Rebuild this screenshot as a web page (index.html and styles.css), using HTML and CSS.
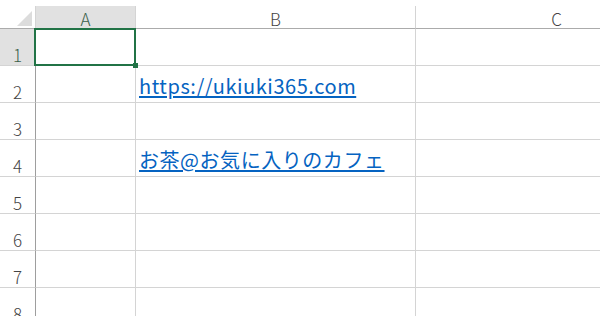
FILE: index.html
```html
<!DOCTYPE html>
<html lang="ja">
<head>
<meta charset="utf-8">
<title>Sheet</title>
<link rel="stylesheet" href="styles.css">
</head>
<body>
<div class="sheet">
  <div class="grid">
    <div class="corner"><span class="tri"></span></div>
    <div class="colhead sel">A</div>
    <div class="colhead">B</div>
    <div class="colhead">C</div>

    <div class="rowhead sel">1</div><div class="cell"></div><div class="cell"></div><div class="cell"></div>
    <div class="rowhead">2</div><div class="cell"></div><div class="cell"><a class="link" href="#">https://ukiuki365.com</a></div><div class="cell"></div>
    <div class="rowhead">3</div><div class="cell"></div><div class="cell"></div><div class="cell"></div>
    <div class="rowhead">4</div><div class="cell"></div><div class="cell"><a class="link" href="#">お茶@お気に入りのカフェ</a></div><div class="cell"></div>
    <div class="rowhead">5</div><div class="cell"></div><div class="cell"></div><div class="cell"></div>
    <div class="rowhead">6</div><div class="cell"></div><div class="cell"></div><div class="cell"></div>
    <div class="rowhead">7</div><div class="cell"></div><div class="cell"></div><div class="cell"></div>
    <div class="rowhead">8</div><div class="cell"></div><div class="cell"></div><div class="cell"></div>
  </div>
  <div class="selection"><span class="handle"></span></div>
</div>
</body>
</html>
```
FILE: styles.css
```css
html, body {
  margin: 0;
  padding: 0;
  background: #fff;
  overflow: hidden;
}
.sheet {
  position: relative;
  width: 600px;
  height: 316px;
  overflow: hidden;
  padding-top: 6px;
  box-sizing: border-box;
  font-family: "Noto Sans CJK JP", "Noto Sans", sans-serif;
}
.grid {
  display: grid;
  grid-template-columns: 36px 100px 280px 282px;
  grid-template-rows: 23px repeat(8, 37px);
  width: 698px;
}
.grid > div {
  box-sizing: border-box;
  border-right: 1px solid #d4d4d4;
  border-bottom: 1px solid #d4d4d4;
}
.corner {
  position: relative;
  border-bottom-color: #ababab !important;
}
.tri {
  position: absolute;
  right: 3px;
  bottom: 2px;
  width: 0;
  height: 0;
  border-left: 15px solid transparent;
  border-bottom: 15px solid #dcdcdc;
}
.colhead {
  display: flex;
  justify-content: center;
  align-items: flex-end;
  font-size: 17px;
  font-weight: 300;
  line-height: 17px;
  color: #444;
  padding-bottom: 1px;
  border-bottom-color: #ababab !important;
}
.colhead.sel {
  background: #e1e1e1;
  color: #3a5f4a;
}
.rowhead {
  display: flex;
  justify-content: center;
  align-items: flex-end;
  font-size: 17px;
  font-weight: 300;
  line-height: 17px;
  color: #444;
  padding-bottom: 2px;
  border-right-color: #9e9e9e !important;
}
.rowhead.sel {
  background: #e1e1e1;
  color: #3a5f4a;
}
.cell {
  display: flex;
  align-items: flex-end;
  padding: 0 0 6px 3px;
  white-space: nowrap;
  overflow: visible;
}
.link {
  font-size: 20px;
  line-height: 20px;
  letter-spacing: 0.55px;
  color: #0563c1;
  text-decoration: underline;
  text-underline-offset: 2px;
}
.selection {
  position: absolute;
  left: 34px;
  top: 28px;
  width: 102px;
  height: 38px;
  box-sizing: border-box;
  border: 2px solid #217346;
}
.handle {
  position: absolute;
  right: -4px;
  bottom: -4px;
  width: 5px;
  height: 5px;
  background: #217346;
}
```
